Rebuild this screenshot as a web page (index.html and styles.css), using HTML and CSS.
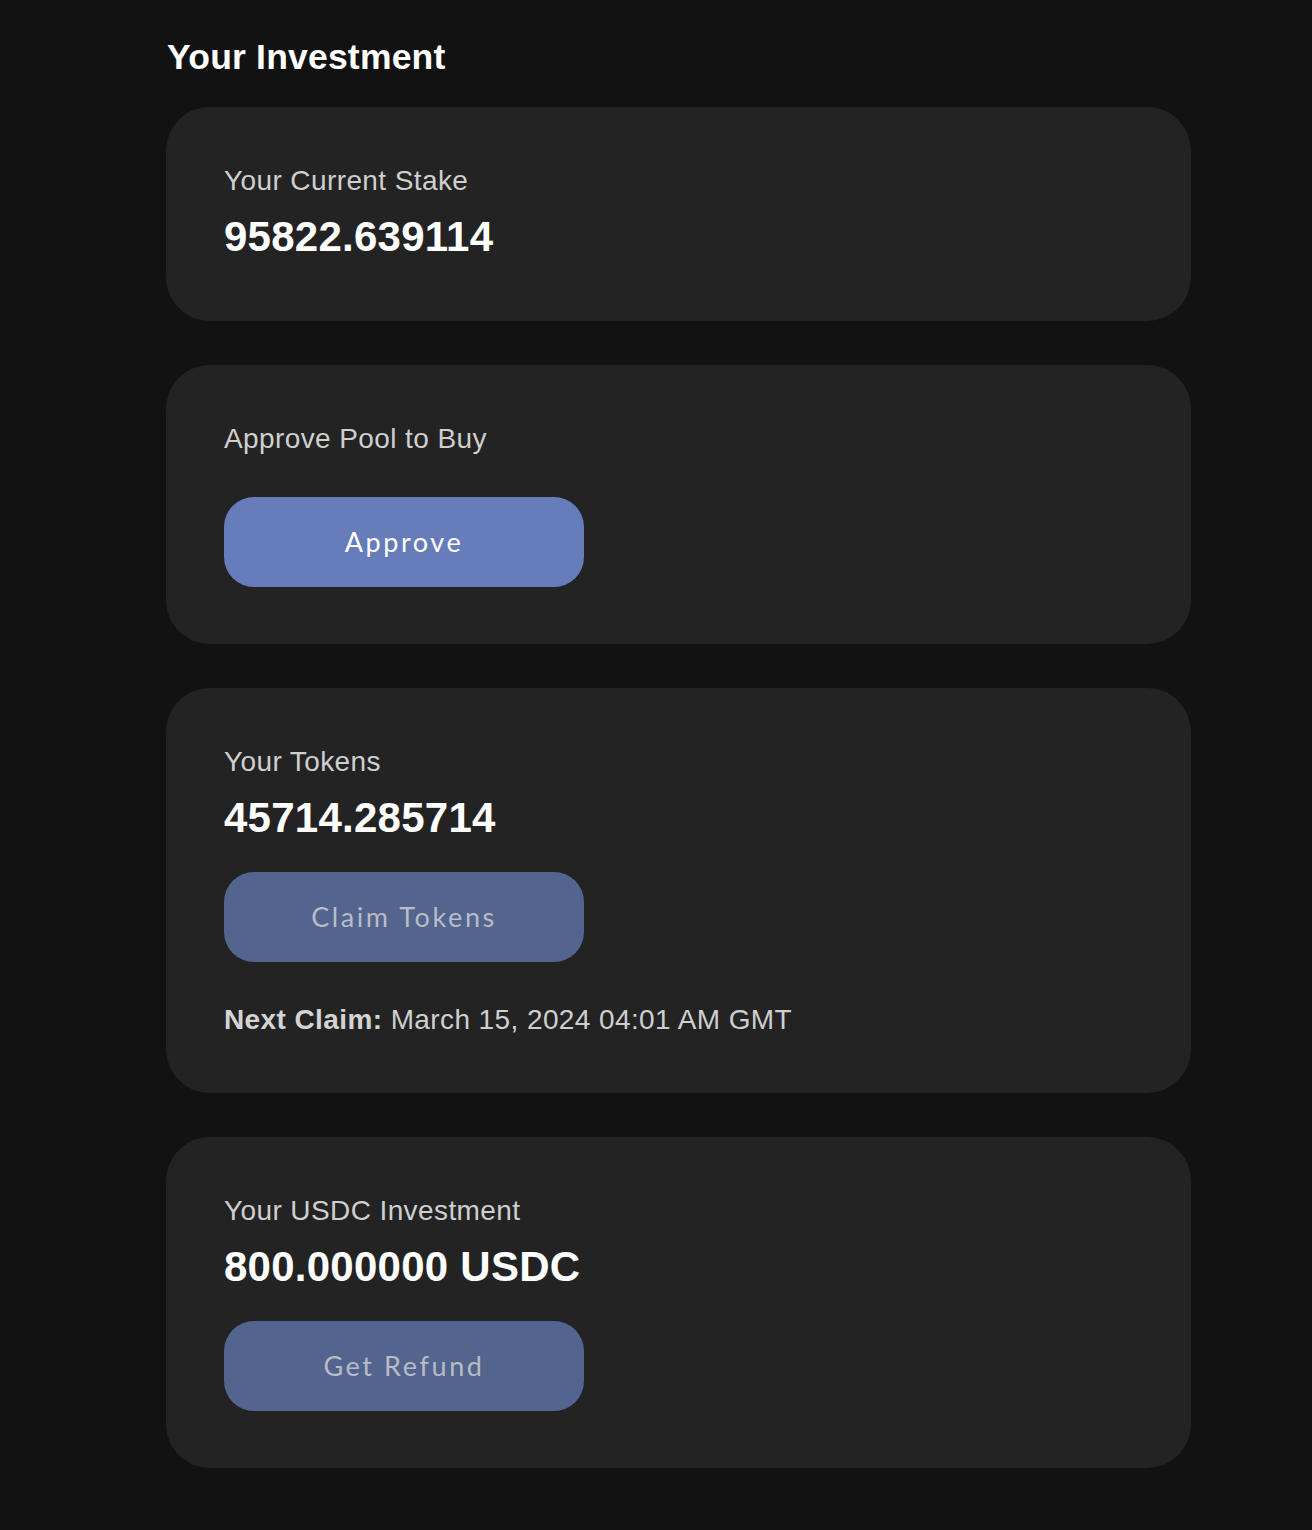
FILE: index.html
```html
<!DOCTYPE html>
<html>
<head>
<meta charset="utf-8">
<link rel="stylesheet" href="styles.css">
</head>
<body>
<main class="page">
  <h2 class="title">Your Investment</h2>
  <section class="card card-stake">
    <div class="label">Your Current Stake</div>
    <div class="value">95822.639114</div>
  </section>
  <section class="card">
    <div class="label">Approve Pool to Buy</div>
    <button class="btn btn-approve">Approve</button>
  </section>
  <section class="card">
    <div class="label">Your Tokens</div>
    <div class="value">45714.285714</div>
    <button class="btn btn-disabled btn-after-value">Claim Tokens</button>
    <div class="next-claim"><strong>Next Claim:</strong> March 15, 2024 04:01 AM GMT</div>
  </section>
  <section class="card">
    <div class="label">Your USDC Investment</div>
    <div class="value">800.000000 USDC</div>
    <button class="btn btn-disabled btn-after-value">Get Refund</button>
  </section>
</main>
</body>
</html>
```
FILE: styles.css
```css
html, body {
  margin: 0;
  padding: 0;
  background: #121212;
}
body {
  font-family: "Liberation Sans", Arial, Helvetica, sans-serif;
  color: #ffffff;
}
.page {
  width: 1025px;
  margin-left: 166px;
  padding-top: 37px;
  padding-bottom: 63px;
  display: flex;
  flex-direction: column;
  gap: 44px;
}
.title {
  margin: 0 0 -15px 1px;
  font-size: 35.5px;
  line-height: 41px;
  font-weight: 700;
  letter-spacing: 0.2px;
  color: #ffffff;
}
.card {
  background: #232323;
  border-radius: 44px;
  padding: 58px 58px 57px;
  display: flex;
  flex-direction: column;
  align-items: flex-start;
}
.card-stake {
  padding-bottom: 60px;
}
.label {
  font-size: 28px;
  line-height: 32px;
  letter-spacing: 0.4px;
  color: #cfcfcf;
}
.value {
  margin-top: 16px;
  font-size: 42px;
  line-height: 48px;
  font-weight: 700;
  letter-spacing: 0.25px;
  color: #ffffff;
}
.btn {
  width: 360px;
  height: 90px;
  border: none;
  border-radius: 30px;
  font-family: "Lato", "Noto Sans", sans-serif;
  font-size: 27px;
  letter-spacing: 2.6px;
  padding: 0 0 2px;
  margin-top: 42px;
  cursor: pointer;
}
.btn-after-value {
  margin-top: 30px;
}
.btn-approve {
  background: #677cba;
  color: #ffffff;
}
.btn-disabled {
  background: #53648f;
  color: #b9bcc4;
}
.next-claim {
  margin-top: 42px;
  font-size: 28px;
  line-height: 32px;
  letter-spacing: 0.4px;
  color: #cfcfcf;
}
.next-claim strong {
  font-weight: 700;
  color: #d4d4d4;
}
```
